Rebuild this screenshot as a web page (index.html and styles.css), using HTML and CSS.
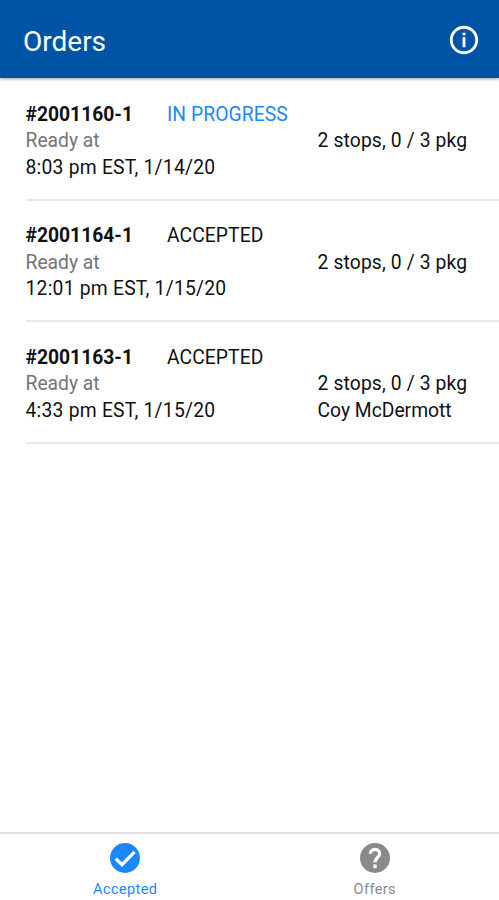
FILE: index.html
```html
<!DOCTYPE html>
<html lang="en">
  <head>
    <meta charset="UTF-8" />
    <meta name="viewport" content="width=device-width, initial-scale=1.0" />
    <title>Orders</title>
    <link rel="stylesheet" href="styles.css">
  </head>

  <body>
    <header class="header">
      <h1>Orders</h1>
      <svg class="info-icon" viewBox="0 0 24 24">
        <path d="M11 6.8h2v1.9h-2zm0 3.1h2v7.3h-2zm1-7.9C6.48 2 2 6.48 2 12s4.48 10 10 10 10-4.48 10-10S17.52 2 12 2zm0 18c-4.41 0-8-3.59-8-8s3.59-8 8-8 8 3.59 8 8-3.59 8-8 8z" />
      </svg>
    </header>

    <!-- Orders list -->
    <main class="orders">
      <div class="order">
        <div class="order-top">
          <span class="order-id">#2001160-1</span>
          <span class="status in-progress">IN PROGRESS</span>
        </div>
        <div class="order-info">
          <div class="ready">
            <p class="label">Ready at</p>
            <p class="time">8:03 pm EST, 1/14/20</p>
          </div>
          <div class="details">
            <p>2 stops, 0 / 3 pkg</p>
          </div>
        </div>
      </div>

      <div class="order">
        <div class="order-top">
          <span class="order-id">#2001164-1</span>
          <span class="status">ACCEPTED</span>
        </div>
        <div class="order-info">
          <div class="ready">
            <p class="label">Ready at</p>
            <p class="time">12:01 pm EST, 1/15/20</p>
          </div>
          <div class="details">
            <p>2 stops, 0 / 3 pkg</p>
          </div>
        </div>
      </div>

      <div class="order">
        <div class="order-top">
          <span class="order-id">#2001163-1</span>
          <span class="status">ACCEPTED</span>
        </div>
        <div class="order-info">
          <div class="ready">
            <p class="label">Ready at</p>
            <p class="time">4:33 pm EST, 1/15/20</p>
          </div>
          <div class="details">
            <p>2 stops, 0 / 3 pkg</p>
            <p class="customer">Coy McDermott</p>
          </div>
        </div>
      </div>
    </main>

    <!-- Bottom tabs -->
    <nav class="tabs">
      <a class="tab active">
        <svg viewBox="0 0 24 24">
          <circle cx="12" cy="12" r="10" />
          <path class="mark" d="M5.8 12.4l4.2 4.1 8.4-8.6" />
        </svg>
        <span>Accepted</span>
      </a>
      <a class="tab">
        <svg viewBox="0 0 24 24">
          <circle cx="12" cy="12" r="10" />
          <path class="mark" d="M8.9 9.2c0-1.7 1.4-2.9 3.1-2.9s3.1 1.2 3.1 2.9c0 2.3-3.1 2.7-3.1 5.6M12 16.4v2.4" />
        </svg>
        <span>Offers</span>
      </a>
    </nav>
  </body>
</html>
```

FILE: styles.css
```css
* {
  box-sizing: border-box;
}

body {
  margin: 0;
  height: 100vh;
  display: flex;
  flex-direction: column;
  overflow: hidden;
  background-color: #fff;
  color: #111;
  font-family: Roboto, sans-serif;
  font-size: 19.3px;
  line-height: 26.5px;
}

h1,
p {
  margin: 0;
}

.header {
  height: 78px;
  padding: 2px 18px 0 23px;
  display: flex;
  align-items: center;
  justify-content: space-between;
  background-color: #0054a6;
  color: #fff;
  box-shadow: 0 1px 3px rgba(0, 0, 0, 0.4);
}

.header h1 {
  padding-top: 4px;
  font-size: 28px;
  font-weight: 400;
}

.info-icon {
  width: 34px;
  height: 34px;
  fill: #fff;
}

.orders {
  flex: 1;
  padding: 1.4px 0 0 25.5px;
}

.order {
  height: 121.4px;
  padding-top: 22.4px;
  border-bottom: 2px solid #e8e8e8;
  white-space: nowrap;
}

.order-top,
.order-info {
  display: flex;
}

.order-id {
  width: 141.5px;
  font-weight: 700;
}

.status {
  letter-spacing: 0.08px;
}

.in-progress {
  color: #1a87fc;
}

.ready {
  width: 292px;
}

.label {
  color: #757575;
}

.time {
  letter-spacing: 0.24px;
}

.details {
  letter-spacing: 0.14px;
}

.customer {
  letter-spacing: 0;
}

.tabs {
  height: 68px;
  display: flex;
  border-top: 2px solid #e0e0e0;
}

.tab {
  flex: 1;
  display: flex;
  flex-direction: column;
  align-items: center;
  gap: 4px;
  padding: 6px 0 0 1px;
  color: #8a8a8d;
  font-size: 14.5px;
  line-height: 20px;
  letter-spacing: 0.4px;
}

.tab svg {
  width: 36px;
  height: 36px;
  fill: currentColor;
}

.tab .mark {
  fill: none;
  stroke: #fff;
  stroke-width: 2.2;
}

.tab.active {
  color: #1a87fc;
}
```
